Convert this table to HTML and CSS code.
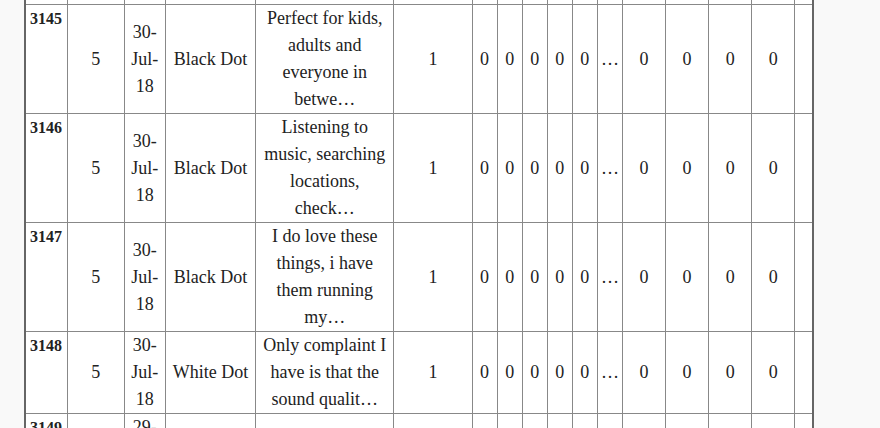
FILE: index.html
```html
<!DOCTYPE html>
<html lang="en">
<head>
<meta charset="utf-8">
<title>Reviews table</title>
<link rel="stylesheet" href="styles.css">
</head>
<body>
<div class="page">
<table class="data">
<colgroup>
<col class="c-id"><col class="c-rating"><col class="c-date"><col class="c-variant"><col class="c-review"><col class="c-feedback">
<col class="c-num"><col class="c-num"><col class="c-num"><col class="c-num"><col class="c-num"><col class="c-more">
<col class="c-wide"><col class="c-wide"><col class="c-wide"><col class="c-wide"><col class="c-last">
</colgroup>
<tbody>
<tr class="prev">
<th></th><td></td><td></td><td></td><td></td><td></td>
<td></td><td></td><td></td><td></td><td></td><td></td><td></td><td></td><td></td><td></td><td></td>
</tr>
<tr>
<th>3145</th><td>5</td><td>30-Jul-18</td><td>Black Dot</td><td>Perfect for kids,<br>adults and<br>everyone in<br>betwe…</td><td>1</td>
<td>0</td><td>0</td><td>0</td><td>0</td><td>0</td><td>…</td><td>0</td><td>0</td><td>0</td><td>0</td><td></td>
</tr>
<tr>
<th>3146</th><td>5</td><td>30-Jul-18</td><td>Black Dot</td><td>Listening to<br>music, searching<br>locations,<br>check…</td><td>1</td>
<td>0</td><td>0</td><td>0</td><td>0</td><td>0</td><td>…</td><td>0</td><td>0</td><td>0</td><td>0</td><td></td>
</tr>
<tr>
<th>3147</th><td>5</td><td>30-Jul-18</td><td>Black Dot</td><td>I do love these<br>things, i have<br>them running<br>my…</td><td>1</td>
<td>0</td><td>0</td><td>0</td><td>0</td><td>0</td><td>…</td><td>0</td><td>0</td><td>0</td><td>0</td><td></td>
</tr>
<tr>
<th>3148</th><td>5</td><td>30-Jul-18</td><td>White Dot</td><td>Only complaint I<br>have is that the<br>sound qualit…</td><td>1</td>
<td>0</td><td>0</td><td>0</td><td>0</td><td>0</td><td>…</td><td>0</td><td>0</td><td>0</td><td>0</td><td></td>
</tr>
<tr>
<th>3149</th><td>5</td><td>29-Jul-18</td><td>Black Dot</td><td>Love it.</td><td>1</td>
<td>0</td><td>0</td><td>0</td><td>0</td><td>0</td><td>…</td><td>0</td><td>0</td><td>0</td><td>0</td><td></td>
</tr>
</tbody>
</table>
</div>
</body>
</html>
```
FILE: styles.css
```css
html, body {
  margin: 0;
  background: #f9f9f9;
}
body {
  font-family: "Liberation Serif", "Times New Roman", serif;
  color: #222;
}
.page {
  height: 428px;
  overflow: hidden;
  padding-left: 24px;
}
.data {
  border-collapse: collapse;
  table-layout: fixed;
  width: 790px;
  margin-top: -106px;
  background: #fff;
  border: 2px solid #666;
  font-size: 18px;
  line-height: 27px;
}
.data td,
.data th {
  border: 1px solid #888;
  padding: 0 2px;
  text-align: center;
  vertical-align: middle;
}
.data th {
  text-align: left;
  vertical-align: top;
  font-size: 16px;
  font-weight: bold;
  padding-left: 4px;
}
.prev td, .prev th { height: 108px; }
.c-id { width: 42px; }
.c-rating { width: 57px; }
.c-date { width: 41px; }
.c-variant { width: 90px; }
.c-review { width: 138px; }
.c-feedback { width: 78px; }
.c-num { width: 25px; }
.c-more { width: 25px; }
.c-wide { width: 43px; }
.c-last { width: 18px; }
```
